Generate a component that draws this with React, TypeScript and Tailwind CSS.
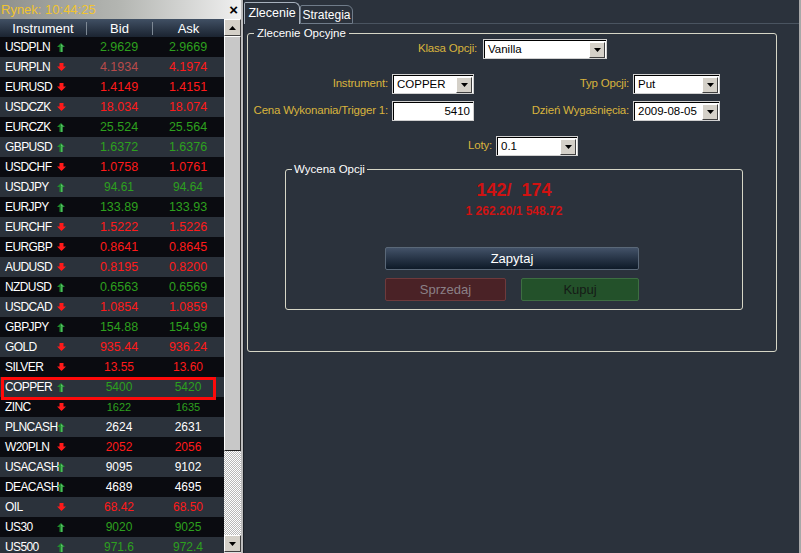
import React from "react";

type Row = { n: string; d: "u" | "d"; b: string; a: string; c: string; s?: string; bc?: string };

const G = "#2da01e";
const R = "#ff1a1a";
const W = "#ffffff";

const rows: Row[] = [
  { n: "USDPLN", d: "u", b: "2.9629", a: "2.9669", c: G },
  { n: "EURPLN", d: "d", b: "4.1934", a: "4.1974", c: R, bc: "#b84a4a" },
  { n: "EURUSD", d: "d", b: "1.4149", a: "1.4151", c: R },
  { n: "USDCZK", d: "d", b: "18.034", a: "18.074", c: R },
  { n: "EURCZK", d: "u", b: "25.524", a: "25.564", c: G },
  { n: "GBPUSD", d: "u", b: "1.6372", a: "1.6376", c: G },
  { n: "USDCHF", d: "d", b: "1.0758", a: "1.0761", c: R },
  { n: "USDJPY", d: "u", b: "94.61", a: "94.64", c: G, s: "text-[12px]" },
  { n: "EURJPY", d: "u", b: "133.89", a: "133.93", c: G },
  { n: "EURCHF", d: "d", b: "1.5222", a: "1.5226", c: R },
  { n: "EURGBP", d: "d", b: "0.8641", a: "0.8645", c: R },
  { n: "AUDUSD", d: "d", b: "0.8195", a: "0.8200", c: R },
  { n: "NZDUSD", d: "u", b: "0.6563", a: "0.6569", c: G },
  { n: "USDCAD", d: "d", b: "1.0854", a: "1.0859", c: R },
  { n: "GBPJPY", d: "u", b: "154.88", a: "154.99", c: G },
  { n: "GOLD", d: "d", b: "935.44", a: "936.24", c: R },
  { n: "SILVER", d: "d", b: "13.55", a: "13.60", c: R, s: "text-[12px]" },
  { n: "COPPER", d: "u", b: "5400", a: "5420", c: G, s: "text-[12px]" },
  { n: "ZINC", d: "d", b: "1622", a: "1635", c: G, s: "text-[11px]" },
  { n: "PLNCASH", d: "u", b: "2624", a: "2631", c: W, s: "text-[12px]" },
  { n: "W20PLN", d: "d", b: "2052", a: "2056", c: R, s: "text-[12px]" },
  { n: "USACASH", d: "u", b: "9095", a: "9102", c: W, s: "text-[12px]" },
  { n: "DEACASH", d: "u", b: "4689", a: "4695", c: W, s: "text-[12px]" },
  { n: "OIL", d: "d", b: "68.42", a: "68.50", c: R, s: "text-[12px]" },
  { n: "US30", d: "u", b: "9020", a: "9025", c: G, s: "text-[12px]" },
  { n: "US500", d: "u", b: "971.6", a: "972.4", c: G, s: "text-[12px]" },
];

function Arrow({ d }: { d: "u" | "d" }) {
  if (d === "u")
    return (
      <svg width="8" height="9" viewBox="0 0 8 9" className="block">
        <polygon points="4,0 8,4 5.5,4 5.5,9 2.5,9 2.5,4 0,4" fill="#1e8c2c" />
        <polygon points="4,1 6.5,3.5 4,3.5" fill="#62c870" />
        <rect x="4" y="4" width="1.5" height="5" fill="#4db85c" />
      </svg>
    );
  return (
    <svg width="9" height="8" viewBox="0 0 9 8" className="block">
      <polygon points="2.5,0 6.5,0 6.5,3.5 9,3.5 4.5,8 0,3.5 2.5,3.5" fill="#ff1a1a" />
    </svg>
  );
}

function Tri({ up }: { up?: boolean }) {
  return (
    <svg width="7" height="4" viewBox="0 0 7 4" className="block">
      {up ? <polygon points="0,4 7,4 3.5,0" fill="#000" /> : <polygon points="0,0 7,0 3.5,4" fill="#000" />}
    </svg>
  );
}

function Btn3D({ className, children }: { className?: string; children?: React.ReactNode }) {
  return (
    <div
      className={
        "flex items-center justify-center bg-[#d4d0c8] border border-t-[#ffffff] border-l-[#ffffff] border-r-[#404040] border-b-[#404040] " +
        (className || "")
      }
    >
      {children}
    </div>
  );
}

function Select({ w, value, right, button = true }: { w: string; value: string; right?: boolean; button?: boolean }) {
  return (
    <div className={"h-[20px] border border-[#d0d0d0] flex " + w}>
      <div className="flex-1 flex items-center border-t border-l border-t-black border-l-black bg-white">
        <span className={"flex-1 text-[11.5px] text-black px-[3px] leading-none " + (right ? "text-right" : "")}>{value}</span>
        {button && (
          <Btn3D className="w-[16px] h-[16px] mr-[1px]">
            <Tri />
          </Btn3D>
        )}
      </div>
    </div>
  );
}

function Label({ w, text }: { w: string; text: string }) {
  return <div className={"text-right text-[11.5px] tracking-[-0.2px] text-[#d9b43c] leading-none " + w}>{text}</div>;
}

export default function App() {
  return (
    <div className="w-[801px] h-[553px] flex overflow-hidden bg-[#2b323c] font-['Liberation_Sans',Arial,sans-serif]">
      {/* Left panel */}
      <div className="w-[241px] h-full flex flex-col bg-[#0a0b10]">
        <div className="h-[19px] flex items-center justify-between pl-[1px] pr-[3px] bg-linear-to-r from-[#8f918d] via-[#b4b6b2] to-[#f0f0f0]">
          <span className="text-[13px] text-[#f0c430] leading-none">Rynek: 10:44:25</span>
          <span className="text-[15px] text-black font-bold leading-none">×</span>
        </div>
        <div className="flex flex-1 overflow-hidden">
          <div className="w-[224px] flex flex-col">
            <div className="h-[18px] shrink-0 flex items-center bg-linear-to-b from-[#415064] to-[#1b2431] text-white text-[13px] leading-none">
              <div className="w-[86px] text-center">Instrument</div>
              <div className="w-px h-[13px] bg-[#7d8894]" />
              <div className="w-[65px] text-center">Bid</div>
              <div className="w-px h-[13px] bg-[#7d8894]" />
              <div className="flex-1 text-center">Ask</div>
            </div>
            {rows.map((r, i) => (
              <div
                key={r.n}
                className={"relative h-[20px] shrink-0 flex items-center " + (i % 2 === 0 ? "bg-[#0a0b10]" : "bg-[#2b323b]")}
              >
                <div className="w-[86px] flex items-center">
                  <span className="pl-[5px] w-[57px] text-[12px] text-white leading-none whitespace-nowrap tracking-[-0.6px]">{r.n}</span>
                  <Arrow d={r.d} />
                </div>
                <div className={"w-[66px] text-center leading-none " + (r.s || "text-[12.5px]")} style={{ color: r.bc || r.c }}>
                  {r.b}
                </div>
                <div className={"flex-1 text-center leading-none " + (r.s || "text-[12.5px]")} style={{ color: r.c }}>
                  {r.a}
                </div>
                {r.n === "COPPER" && (
                  <div className="absolute left-[1px] top-0 w-[215px] h-[23px] border-[3px] border-[#ff0a0a] z-10" />
                )}
              </div>
            ))}
          </div>
          {/* Scrollbar */}
          <div className="w-[17px] flex flex-col bg-[#d4d0c8]">
            <Btn3D className="h-[17px] shrink-0">
              <Tri up />
            </Btn3D>
            <div className="h-[415px] shrink-0 bg-[#c8c8c8] border border-t-[#ffffff] border-l-[#ffffff] border-r-[#303030] border-b-[#202020]" />
            <div className="flex-1 bg-[repeating-conic-gradient(#ffffff_0_25%,#b8b8b8_0_50%)] bg-[length:2px_2px]" />
            <Btn3D className="h-[17px] shrink-0">
              <Tri />
            </Btn3D>
            <div className="h-[1px] bg-[#e0e0e0]" />
          </div>
        </div>
      </div>

      {/* Divider */}
      <div className="w-[3px] h-full bg-[#bdbdbd] border-r border-r-[#1a1f26]" />

      {/* Right panel */}
      <div className="w-[555px] h-full flex flex-col bg-[#2b323c]">
        <div className="h-[24px] shrink-0 flex items-end">
          <div className="w-[56px] h-[22px] border border-b-0 border-[#a7b1bd] rounded-tr-[6px] rounded-tl-[2px] flex items-center justify-center text-white text-[12.5px] leading-none">
            Zlecenie
          </div>
          <div className="w-[53px] h-[19px] border border-[#707c8a] rounded-tr-[6px] rounded-tl-[2px] flex items-center justify-center text-white text-[12px] leading-none">
            Strategia
          </div>
          <div className="flex-1 h-px bg-[#4a5460]" />
        </div>
        <div className="pl-[3px] pt-[9px]">
          <div className="relative w-[530px] h-[319px] border border-[#d6d6c6] rounded-[3px] flex flex-col pt-[5px]">
            <div className="absolute -top-[7px] left-[6px] px-[3px] bg-[#2b323c] text-white text-[11.5px] leading-[13px]">
              Zlecenie Opcyjne
            </div>
            <div className="h-[20px] flex items-center">
              <Label w="w-[229px]" text="Klasa Opcji:" />
              <div className="ml-[6px]">
                <Select w="w-[124px]" value="Vanilla" />
              </div>
            </div>
            <div className="h-[20px] mt-[15px] flex items-center">
              <Label w="w-[140px]" text="Instrument:" />
              <div className="ml-[4px]">
                <Select w="w-[82px]" value="COPPER" />
              </div>
              <Label w="w-[155px]" text="Typ Opcji:" />
              <div className="ml-[4px]">
                <Select w="w-[87px]" value="Put" />
              </div>
            </div>
            <div className="h-[20px] mt-[7px] flex items-center">
              <Label w="w-[140px]" text="Cena Wykonania/Trigger 1:" />
              <div className="ml-[4px]">
                <Select w="w-[82px]" value="5410" right button={false} />
              </div>
              <Label w="w-[155px]" text="Dzień Wygaśnięcia:" />
              <div className="ml-[4px]">
                <Select w="w-[87px]" value="2009-08-05" />
              </div>
            </div>
            <div className="h-[20px] mt-[15px] flex items-center">
              <Label w="w-[244px]" text="Loty:" />
              <div className="ml-[4px]">
                <Select w="w-[82px]" value="0.1" />
              </div>
            </div>
            <div className="relative mt-[13px] ml-[37px] w-[458px] h-[141px] border border-[#d6d6c6] rounded-[3px] flex flex-col items-center pt-[10px]">
              <div className="absolute -top-[7px] left-[6px] px-[2px] bg-[#2b323c] text-white text-[11.5px] leading-[13px]">
                Wycena Opcji
              </div>
              <div className="text-[18px] font-bold leading-[20px] text-[#d01212] whitespace-pre">142/  174</div>
              <div className="mt-[4px] text-[12px] font-bold leading-[14px] text-[#d01212]">1 262.20/1 548.72</div>
              <div className="self-start ml-[99px] mt-[29px] flex flex-col">
                <div className="w-[254px] h-[23px] rounded-[2px] border border-[#5a6878] bg-linear-to-b from-[#435268] to-[#0e1a28] flex items-center justify-center text-white text-[13px] leading-none">
                  Zapytaj
                </div>
                <div className="mt-[8px] flex">
                  <div className="w-[121px] h-[23px] rounded-[2px] border border-[#6e3a3c] bg-[#4a2226] flex items-center justify-center text-[#8a8086] text-[13px] leading-none">
                    Sprzedaj
                  </div>
                  <div className="ml-[15px] w-[118px] h-[23px] rounded-[2px] border border-[#3d6e42] bg-[#23512a] flex items-center justify-center text-[#151a16] text-[13px] leading-none">
                    Kupuj
                  </div>
                </div>
              </div>
            </div>
          </div>
        </div>
      </div>
      <div className="w-[2px] h-full bg-[#a8a8a8]" />
    </div>
  );
}
